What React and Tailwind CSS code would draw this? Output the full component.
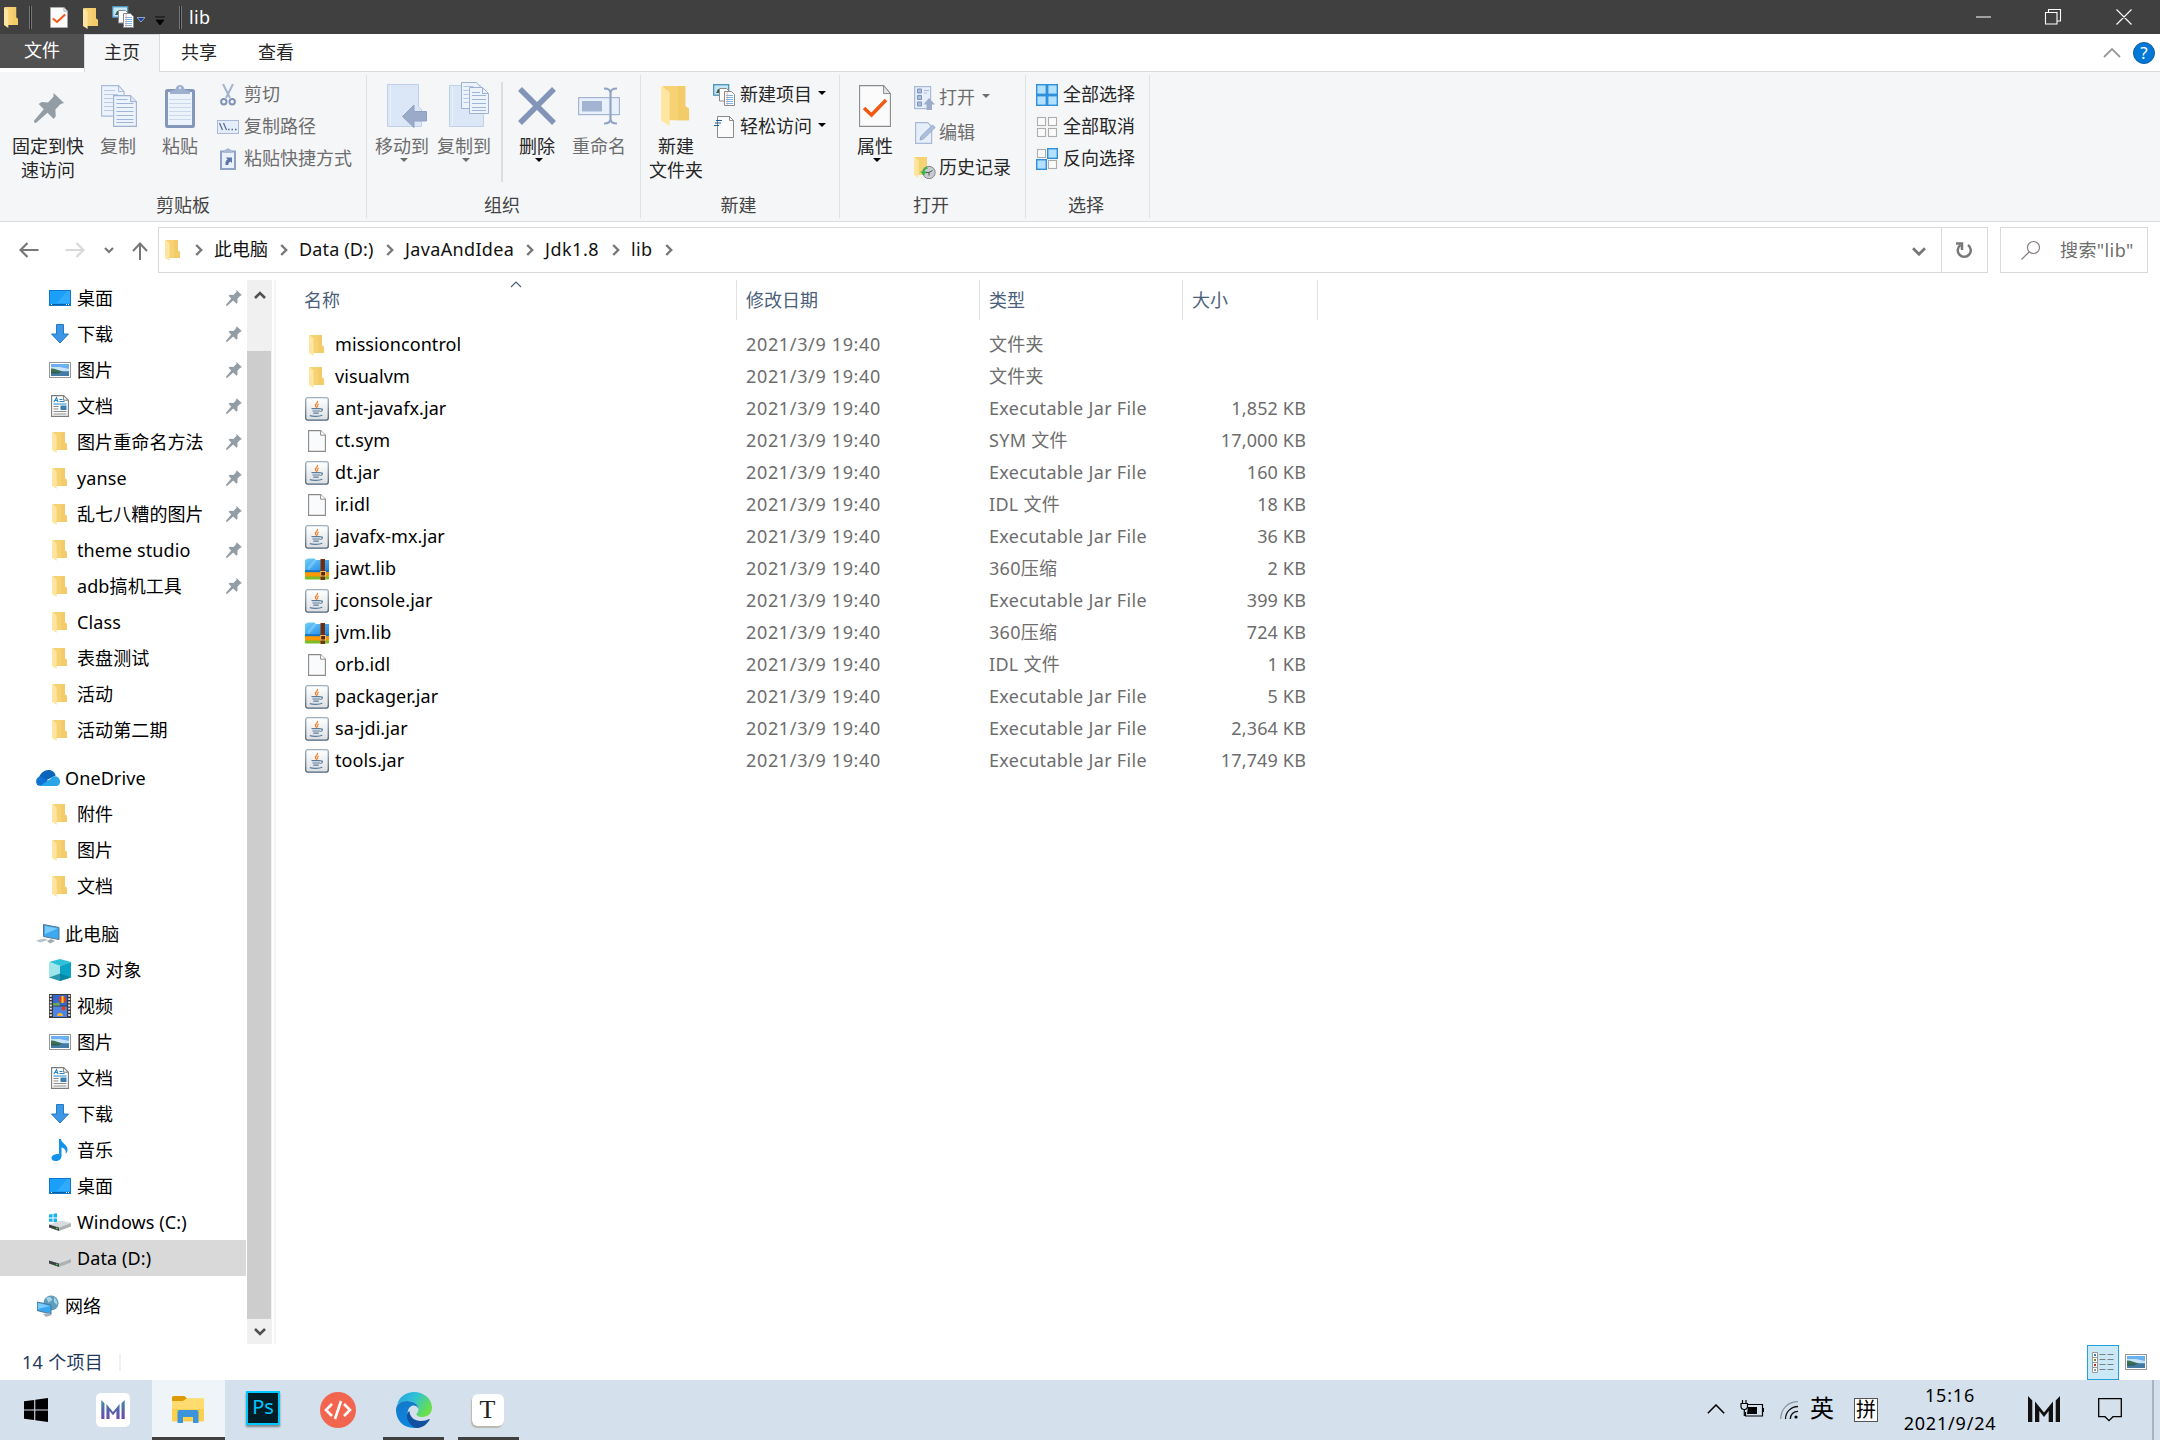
import React from "react";

const Folder = ({ className = "w-[15px] h-[21px]" }) => (
    <svg viewBox="0 0 15 21" className={className} preserveAspectRatio="none">
        <path d="M1 0h12v10.5l2 1.5v6H4z" fill="#f7d275" />
        <path d="M9 0h4v10.5l2 1.5v6H9z" fill="#f3cb68" />
        <path d="M0 0l4.6 3.2v17.8L0 18z" fill="#ffe6a0" />
    </svg>
);

const Page = ({ className = "w-[18px] h-[22px]" }) => (
    <svg viewBox="0 0 18 22" className={className}>
        <path d="M.6.6h12l4.800 4.600v16.200H.6z" fill="#fafbfc" stroke="#8a8a8a" strokeWidth="1.100" />
        <path d="M12.600.6v4.600h4.800" fill="#fff" stroke="#8a8a8a" />
    </svg>
);

const CheckPage = ({ className }) => (
    <svg viewBox="0 0 32 42" className={className} preserveAspectRatio="none">
        <path d="M.6.6h24l6.800 8v32.800H.6z" fill="#fbfbfb" stroke="#8a8a8a" strokeWidth="1.100" />
        <path d="M24.600.6v8h6.800z" fill="#e4e6e8" stroke="#8a8a8a" />
        <path d="M5 23l7.500 7L27 15" fill="none" stroke="#f25a14" strokeWidth="3.600" />
    </svg>
);

const JarIcon = () => (
    <svg viewBox="0 0 24 24" className="w-6 h-6">
        <defs>
            <linearGradient id="jar" x1="0" y1="0" x2="0" y2="1">
                <stop offset="0" stopColor="#fff" />
                <stop offset="1" stopColor="#dcdfe2" />
            </linearGradient>
            <linearGradient id="jarEdge" x1="0" y1="0" x2="0" y2="1">
                <stop offset="0" stopColor="#9db1c4" />
                <stop offset="1" stopColor="#4d6378" />
            </linearGradient>
        </defs>
        <rect x=".7" y=".7" width="22.600" height="22.400" rx="2" fill="url(#jar)" stroke="url(#jarEdge)" strokeWidth="1.300" />
        <path d="M12.500 4c1 2-3.500 3-2 5l1.300 2M13.800 7c-2.500 1.200-1.600 2-.8 3.200" fill="none" stroke="#ee8a35" strokeWidth="1.300" />
        <path d="M6.500 11.700h9M7.500 14h7.500M8.300 16.200h5.500M4.800 18.600c3 1 9.500 1 12.500-.4M15.500 12c2.800-.8 2.500 2-.3 2.500" fill="none" stroke="#5a7d9c" strokeWidth="1.200" />
    </svg>
);

const ZipIcon = () => (
    <svg viewBox="0 0 24 22" className="w-6 h-[22px]">
        <defs>
            <linearGradient id="zip" x1="0" y1="0" x2="1" y2="1">
                <stop offset="0" stopColor="#71cdfb" />
                <stop offset="1" stopColor="#1b86e4" />
            </linearGradient>
        </defs>
        <rect y="15" width="24" height="6.500" rx="1" fill="#79bd27" />
        <rect y="13.500" width="24" height="5" fill="#ff9800" />
        <path d="M0 2l3-1.500h6l2 1.500h13v11.500H0z" fill="url(#zip)" />
        <path d="M0 12.200h24v2H0z" fill="#1473cc" />
        <path d="M2 10l7-8h3l-8 10z" fill="#8fdcff" opacity=".5" />
        <rect x="15.500" y="1" width="4.500" height="21" fill="#74310f" />
        <rect x="15.700" y="13.500" width="4.800" height="4.500" fill="#5e230a" stroke="#f0c063" />
        <path d="M18 3v8" stroke="#4a1c08" strokeDasharray="1 1.500" />
    </svg>
);

const Pin = ({ className = "w-4 h-4" }) => (
    <svg viewBox="0 0 16 16" className={className}>
        <path d="M10.500 0L16 5.300l-1.800.5-2.800 3 .2 3.600-1.100 1.400-3.300-3.300L1 16l-1-.4v-.8L5.200 8.600 2.500 5.800l1.600-1 3.400.2 2.800-2.900z" fill="#929da5" />
    </svg>
);

const DesktopIcon = () => (
    <svg viewBox="0 0 22 16" className="w-[22px] h-4">
        <rect x=".5" y=".5" width="21" height="15" fill="#1ba0fa" stroke="#0f78cc" />
        <path d="M8 13L18 1h3v12z" fill="#41b2ff" opacity=".6" />
        <path d="M1 14.500h20" stroke="#0b5ea5" />
        <path d="M2 14.500h1M17 14.500h1M19 14.500h1" stroke="#fff" />
    </svg>
);

const DownloadIcon = () => (
    <svg viewBox="0 0 18 20" className="w-[18px] h-5">
        <path d="M5.500.5h7v9.500h5L9 19 .5 10h5z" fill="#3c98e6" stroke="#2779c4" />
    </svg>
);

const PictureIcon = () => (
    <svg viewBox="0 0 22 16" className="w-[22px] h-4">
        <rect x=".5" y=".5" width="21" height="15" fill="#fff" stroke="#979797" />
        <rect x="2" y="2" width="18" height="12" fill="#6bb0ef" />
        <path d="M2 5h9l9 2v2H2z" fill="#c9e3f7" />
        <path d="M2 6.500c4 0 8 2 13 3.500H2z" fill="#3e7251" />
        <path d="M2 9.500h18V14H2z" fill="#447ba5" />
        <path d="M2 9.500h11l-4 2H2z" fill="#316149" />
    </svg>
);

const DocIcon = () => (
    <svg viewBox="0 0 18 22" className="w-[18px] h-[22px]">
        <path d="M.6.6h12l4.800 4.600v16.200H.6z" fill="#fff" stroke="#7c7c7c" strokeWidth="1.100" />
        <path d="M12.600.6v4.600h4.800" fill="none" stroke="#7c7c7c" />
        <path d="M3 7l2.500-4.500L7 7M4 5.500h3M8.500 4.500h3M8.500 6.500h5M2.500 9h13" stroke="#1e86d0" strokeWidth="1.100" fill="none" />
        <path d="M2.500 11.500h5M2.500 14h5M2.500 16.500h13M2.500 19h13" stroke="#8a8a8a" />
        <rect x="9.500" y="10.500" width="6" height="4.500" fill="#3b7dae" />
    </svg>
);

const OneDriveIcon = () => (
    <svg viewBox="0 0 24 16" className="w-6 h-4">
        <path d="M3 7C5 3 8 0 12.500 0c4 0 6.500 2.500 7.200 5.500L9 11 1 15z" fill="#0a64bc" />
        <path d="M2 15.500C-1.500 12 0 7 5 6.500l9 5.500-8 4z" fill="#1072d2" />
        <path d="M4 16l11-7.500c2-4 8.500-2.500 9 2.500.2 3-1.500 5-4 5z" fill="#28a4e8" />
    </svg>
);

const PcIcon = () => (
    <svg viewBox="0 0 24 20" className="w-6 h-5">
        <path d="M7.500.5L23 3.500v12L7.500 12.500z" fill="#3fa9f0" stroke="#517590" />
        <path d="M9 2l12.500 2.500L9 10z" fill="#7accff" />
        <path d="M0 16.500l8-2 4 1.500-8 2.500z" fill="#b9c2c9" />
        <path d="M11 17l4-2 4 2-5 2.500z" fill="#9faab3" />
    </svg>
);

const CubeIcon = () => (
    <svg viewBox="0 0 22 22" className="w-[22px] h-[22px]">
        <path d="M11 0l11 3-11 4L0 3z" fill="#2cc1d8" />
        <path d="M0 3l11 4v15L0 18.500z" fill="#9fe6ea" />
        <path d="M22 3L11 7v15l11-3.500z" fill="#0aa3c6" />
        <path d="M0 18.500l11-4 11 4L11 22z" fill="#067c96" opacity=".75" />
    </svg>
);

const VideoIcon = () => (
    <svg viewBox="0 0 22 24" className="w-[22px] h-6">
        <rect width="22" height="24" fill="#3a3a3a" />
        <path d="M1.800 1v22M20.200 1v22" stroke="#e8e8e8" strokeWidth="2" strokeDasharray="1.800 1.400" />
        <rect x="4" y="1" width="14" height="10.500" fill="#3468cf" />
        <rect x="4" y="12.500" width="14" height="10.500" fill="#4f83e2" />
        <circle cx="13.500" cy="5.500" r="3.500" fill="#e33b20" />
        <path d="M13.500 2v7" stroke="#f9d52a" strokeWidth="2" />
        <path d="M4 9.500l6-1 1 3H4z" fill="#6cb04c" />
        <circle cx="14.500" cy="14.500" r="2" fill="#e33b20" />
        <path d="M8 22a3 3 0 016 0z" fill="#f9b52a" />
    </svg>
);

const MusicIcon = () => (
    <svg viewBox="0 0 18 22" className="w-[18px] h-[22px]">
        <path d="M8 0h2c0 4 6 5 6.500 10 .2 2-.8 4-1.800 5 .6-4-1.200-6-4.200-6.500V17c0 3-2.500 5-6 5-2.500 0-4-1.200-4-3 0-2.500 3-4.200 7.500-4z" fill="#1292e8" />
    </svg>
);

const DriveIcon = ({ win }) => (
    <svg viewBox="0 0 22 18" className="w-[22px] h-[18px]">
        {win && <path d="M0 1.500l3.500-.5v3.500H0zM4.500.8L8 .3v4.200H4.500zM0 5.500h3.500V9L0 8.500zM4.500 5.500H8v4l-3.500-.4z" fill="#16b4f0" />}
        <path d="M0 11.500L12 7.500l10 2.500-12 4.500z" fill="#d9dadc" />
        <path d="M0 11.500l10 3V18L0 14.500z" fill="#3d4144" />
        <path d="M10 14.500L22 10v3.500L10 18z" fill="#aeb1b4" />
        <path d="M7 15.300l1.500.5" stroke="#42d342" strokeWidth="1.500" />
    </svg>
);

const NetworkIcon = () => (
    <svg viewBox="0 0 22 22" className="w-[22px] h-[22px]">
        <circle cx="14" cy="8" r="7.600" fill="#5f9dbd" />
        <path d="M9 3c3-2 5-1 6 1s-3 2-3 4M17 2c2 2 4 5 3 8l-3-3z" fill="#a9d4e6" />
        <path d="M0 7l14 3v9L0 15.500z" fill="#3ba6f0" stroke="#4a7896" />
        <path d="M1 8l12 3-12 3z" fill="#7bcbff" />
        <path d="M6 19l6-1 3 2-6 2z" fill="#a6b0b8" />
    </svg>
);

const NewItemIcon = ({ className = "w-[22px] h-[22px]" }) => (
    <svg viewBox="0 0 22 22" className={className}>
        <rect x=".7" y=".7" width="15" height="10.500" fill="#c4e6f7" stroke="#4a93b8" strokeWidth="1.300" />
        <path d="M3 9l2-4 3 1 1 3z" fill="#33604c" />
        <path d="M6.500 4.500h7l3 3V17h-10z" fill="#fff" stroke="#8a8a8a" />
        <path d="M11.500 7.500h7l3 3v11h-10z" fill="#fff" stroke="#8a8a8a" />
        <path d="M13 11.500h7M13 13.500h7M13 15.500h7M13 17.500h7M13 19.500h7" stroke="#7db5e6" />
        <path d="M14.200 8v13" stroke="#ef9b9b" strokeWidth=".7" />
    </svg>
);

const CopyBig = ({ className = "w-9 h-[42px]" }) => (
    <svg viewBox="0 0 36 42" className={className}>
        <path d="M.6.6h17l5.500 6v24.500H.6z" fill="#edf3fc" stroke="#a9b9d6" strokeWidth="1.100" />
        <path d="M17.600.6v6h5.500" fill="none" stroke="#a9b9d6" />
        <path d="M3 5.500h11M3 9.500h14M3 13.500h9M3 17.500h9M3 21.500h9M3 25.500h9" stroke="#b9cae4" />
        <path d="M12.600 10.600h17l5.800 6v24.800H12.600z" fill="#edf3fc" stroke="#9fb1d1" strokeWidth="1.100" />
        <path d="M29.600 10.600v6h5.800" fill="#dae5f5" stroke="#9fb1d1" />
        <path d="M15.500 14.500h11M15.500 18.500h17M15.500 22.500h17M15.500 26.500h17M15.500 30.500h17M15.500 34.500h17M15.500 37.500h17" stroke="#9fb5d8" />
    </svg>
);

const PasteBig = () => (
    <svg viewBox="0 0 30 43" className="w-[30px] h-[43px]">
        <rect x="1.500" y="5.500" width="27" height="36" rx="1" fill="#edf3fc" stroke="#8598bb" strokeWidth="3" />
        <path d="M5 9V6.500l5.500-2C11 1.500 12.500 0 15 0s4 1.500 4.500 4.500l5.500 2V9z" fill="#9eb0ce" />
        <circle cx="15" cy="3" r="1.200" fill="#dfe8f5" />
        <path d="M4 14.500h22M4 18.500h22M4 22.500h22M4 26.500h22M4 30.500h22M4 34.500h22" stroke="#cad8ec" />
    </svg>
);

const ScissorsIcon = () => (
    <svg viewBox="0 0 16 22" className="w-4 h-[22px]" fill="none">
        <path d="M3 0l7 14M13 0L6 14" stroke="#a3b3ce" strokeWidth="2" />
        <circle cx="3.800" cy="17.800" r="2.700" stroke="#8093b5" strokeWidth="2" />
        <circle cx="12.200" cy="17.800" r="2.700" stroke="#8093b5" strokeWidth="2" />
    </svg>
);

const PathIcon = () => (
    <svg viewBox="0 0 22 14" className="w-[22px] h-[14px]">
        <rect x=".5" y=".5" width="21" height="13" fill="#e4edf9" stroke="#a9b9d6" />
        <path d="M2.500 3l3 7M6.500 3l3 7" stroke="#536a92" strokeWidth="1.200" />
        <path d="M11 9.500h1.500M14.500 9.500H16M18 9.500h1.500" stroke="#536a92" strokeWidth="1.500" />
    </svg>
);

const ShortcutIcon = () => (
    <svg viewBox="0 0 16 22" className="w-4 h-[22px]">
        <rect x="1" y="3.500" width="14" height="17.500" fill="#e8f0fb" stroke="#8fa2c4" strokeWidth="2" />
        <path d="M4 5V2.500L8 0l4 2.500V5z" fill="#a9b9d4" />
        <path d="M5.500 17c-.5-3 .5-4.500 2-5.500L6 9.500h6v5.500l-1.700-1.500c-1.500.8-2 1.800-2 3.500z" fill="#5d76a3" />
    </svg>
);

const MoveToIcon = () => (
    <svg viewBox="0 0 40 44" className="w-10 h-11">
        <path d="M.5.5h31v22l3 3v17H.5z" fill="#dbe6f6" stroke="#c0d0e8" />
        <path d="M3.500 1v41" fill="none" stroke="#e9f0fa" />
        <path d="M15.500 32.500L27 21v6.500h12.500v9.500H27v6.500z" fill="#9aaac9" stroke="#8fa1c3" />
    </svg>
);

const CopyToIcon = () => (
    <svg viewBox="0 0 40 46" className="w-10 h-[46px]">
        <path d="M.5 3.500h31v20l3 3v18H.5z" fill="#dbe6f6" stroke="#c0d0e8" />
        <path d="M3.500 4v40" fill="none" stroke="#e9f0fa" />
        <path d="M12.500.5h15l4.500 5v21H12.500z" fill="#edf3fc" stroke="#9fb1d1" />
        <path d="M14.500 4.500h10M14.500 8.500h5M14.500 12.500h5M14.500 16.500h5M14.500 20.500h5" stroke="#b4c5e0" />
        <path d="M20.500 5.500h13l6 6v20h-19z" fill="#edf3fc" stroke="#9fb1d1" />
        <path d="M33.500 5.500v6h6" fill="none" stroke="#9fb1d1" />
        <path d="M23 10.500h8M23 13.500h14M23 17.500h14M23 21.500h14M23 25.500h14M23 28.500h14" stroke="#9fb5d8" />
    </svg>
);

const DeleteIcon = () => (
    <svg viewBox="0 0 38 38" className="w-[38px] h-[38px]">
        <path d="M2 2l34 34M36 2L2 36" stroke="#8295b8" strokeWidth="5.500" />
    </svg>
);

const RenameIcon = () => (
    <svg viewBox="0 0 42 38" className="w-[42px] h-[38px]">
        <rect x=".6" y="10.600" width="40.800" height="17" fill="#e8f0fc" stroke="#a4b5d4" strokeWidth="1.200" />
        <rect x="4" y="14" width="20" height="10.500" fill="#a3b4d1" />
        <path d="M26 1.500c4 0 6.500 1 6.500 4.500v26c0 3.500-2.500 4.500-6.500 4.500M39 1.500c-4 0-6.500 1-6.500 4.500v26c0 3.500 2.500 4.500 6.500 4.500" fill="none" stroke="#92a4c5" strokeWidth="2.200" />
    </svg>
);

const EasyIcon = () => (
    <svg viewBox="0 0 21 22" className="w-[21px] h-[22px]">
        <path d="M3.500.5h12l4 4v17h-16z" fill="#fbfbfb" stroke="#8a8a8a" />
        <path d="M15.500.5v4h4" fill="none" stroke="#8a8a8a" />
        <path d="M2 4.500h6M1 7h6M0 9.500h5" stroke="#1f5f9c" strokeWidth="1.200" />
    </svg>
);

const OpenIcon = () => (
    <svg viewBox="0 0 22 24" className="w-[22px] h-6">
        <rect x=".6" y=".6" width="16" height="22" fill="#e6eefa" stroke="#a9b9d6" strokeWidth="1.200" />
        <path d="M3.500 3h4v4h-4zM3.500 9.500h4v4h-4zM3.500 16h4v4h-4z" fill="#a9bbdb" stroke="#7f95bb" />
        <path d="M10 4.500h5M10 7h3" stroke="#a9b9d6" />
        <path d="M15 12l6 6.500h-3V24h-5.500v-5.500H9.500z" fill="#9cadcb" />
    </svg>
);

const EditIcon = () => (
    <svg viewBox="0 0 21 22" className="w-[21px] h-[22px]">
        <path d="M.6.600h12l4 4v16.800H.6z" fill="#e6eefa" stroke="#a9b9d6" strokeWidth="1.200" />
        <path d="M5 18l1-3.500L17.500 3l2.500 2.500L8.500 16.800z" fill="#aebfdd" stroke="#93a6c9" />
    </svg>
);

const HistoryIcon = () => (
    <svg viewBox="0 0 22 22" className="w-[22px] h-[22px]">
        <path d="M1 0h12v18H4z" fill="#f7d275" />
        <path d="M0 0l4.600 3.200V21L0 18z" fill="#ffe6a0" />
        <circle cx="15" cy="15.500" r="6.200" fill="#c8cbcd" stroke="#85898c" />
        <path d="M12 15.500h3l3.500-2M15 15.500v3" stroke="#555" fill="none" />
        <path d="M12.500 9.500c-3 1-4 3-4 5H6l4 4 2.500-4h-1.800c.2-2 1.500-3 3.300-3z" fill="#33b54a" />
    </svg>
);

// four tiles, `on` lists which of them are highlighted
const TilesIcon = ({ on }) => (
    <svg viewBox="0 0 22 22" className="w-[22px] h-[22px]">
        {[[0, 0], [11, 0], [0, 11], [11, 11]].map(([x, y], i) => (
            on.includes(i)
                ? <rect key={i} x={x + 0.7} y={y + 0.7} width="9.600" height="9.600" fill="#b3e0ff" stroke="#2f8fdb" strokeWidth="1.400" />
                : <rect key={i} x={x + 1.5} y={y + 1.5} width="8" height="8" fill="#fbfbfb" stroke="#adadad" strokeWidth="1.100" />
        ))}
    </svg>
);

const Caret = ({ className = "text-black" }) => (
    <svg viewBox="0 0 8 4" className={`w-2 h-1 ${className}`}>
        <path d="M0 0h8L4 4z" fill="currentColor" />
    </svg>
);

const Chevron = ({ d = "M1 1l6 6-6 6", box = "0 0 8 14", className, width = 2 }) => (
    <svg viewBox={box} className={className} fill="none" stroke="currentColor" strokeWidth={width}>
        <path d={d} />
    </svg>
);

const BigButton = ({ icon, lines, width, disabled, caret }) => (
    <div className={`flex flex-col items-center shrink-0 pt-[10px] ${width} ${disabled ? "text-[#6d6d6d]" : "text-[#262626]"}`}>
        <div className="h-12 flex items-center justify-center">{icon}</div>
        <div className="mt-1 text-center leading-6 whitespace-nowrap">
            {lines.map((line) => <div key={line}>{line}</div>)}
        </div>
        {caret && <Caret className={disabled ? "ml-1 text-[#6d6d6d]" : "ml-1 text-black"} />}
    </div>
);

const SmallButton = ({ icon, label, disabled, caret, height = "h-8", gap = "gap-1" }) => (
    <div className={`flex items-center whitespace-nowrap ${height} ${gap} ${disabled ? "text-[#6d6d6d]" : "text-[#262626]"}`}>
        <span className="w-6 flex justify-center">{icon}</span>
        <span className="leading-6 -mt-0.5">{label}</span>
        {caret && <Caret className={disabled ? "ml-[5px] -mt-1 text-[#6d6d6d]" : "ml-0.5 -mt-1 text-black"} />}
    </div>
);

const Group = ({ label, width, children, shift = "pr-[3px]" }) => (
    <div className={`flex shrink-0 h-[149px] ${width}`}>
        <div className="flex-1 flex flex-col">
            <div className="flex h-[121px]">{children}</div>
            <div className={`text-center leading-6 text-[#444] ${shift}`}>{label}</div>
        </div>
        <div className="w-px my-[3px] bg-[#dfe1e3]" />
    </div>
);

const quick = [
    ["桌面", DesktopIcon], ["下载", DownloadIcon], ["图片", PictureIcon], ["文档", DocIcon],
    ["图片重命名方法", Folder], ["yanse", Folder], ["乱七八糟的图片", Folder], ["theme studio", Folder],
    ["adb搞机工具", Folder], ["Class", Folder], ["表盘测试", Folder], ["活动", Folder], ["活动第二期", Folder],
];

const thisPc = [
    ["3D 对象", CubeIcon], ["视频", VideoIcon], ["图片", PictureIcon], ["文档", DocIcon], ["下载", DownloadIcon],
    ["音乐", MusicIcon], ["桌面", DesktopIcon], ["Windows (C:)", () => <DriveIcon win />], ["Data (D:)", DriveIcon],
];

const files = [
    ["missioncontrol", "dir", "文件夹", ""],
    ["visualvm", "dir", "文件夹", ""],
    ["ant-javafx.jar", "jar", "Executable Jar File", "1,852 KB"],
    ["ct.sym", "page", "SYM 文件", "17,000 KB"],
    ["dt.jar", "jar", "Executable Jar File", "160 KB"],
    ["ir.idl", "page", "IDL 文件", "18 KB"],
    ["javafx-mx.jar", "jar", "Executable Jar File", "36 KB"],
    ["jawt.lib", "zip", "360压缩", "2 KB"],
    ["jconsole.jar", "jar", "Executable Jar File", "399 KB"],
    ["jvm.lib", "zip", "360压缩", "724 KB"],
    ["orb.idl", "page", "IDL 文件", "1 KB"],
    ["packager.jar", "jar", "Executable Jar File", "5 KB"],
    ["sa-jdi.jar", "jar", "Executable Jar File", "2,364 KB"],
    ["tools.jar", "jar", "Executable Jar File", "17,749 KB"],
];

const fileIcons = { dir: Folder, jar: JarIcon, page: Page, zip: ZipIcon };

const TreeRow = ({ label, Icon, pinned, selected }) => (
    <div className={`flex items-center h-9 w-[246px] pl-12 pr-1 ${selected ? "bg-[#d9d9d9]" : ""}`}>
        <span className={`w-6 flex justify-center ${Icon === Folder ? "pr-0.5" : ""}`}><Icon /></span>
        <span className="ml-[5px] flex-1 leading-9 tracking-[0.1px]">{label}</span>
        {pinned && <Pin />}
    </div>
);

const TreeRoot = ({ label, Icon }) => (
    <div className="flex items-center h-9 mt-3 pl-9">
        <span className="w-6 flex justify-center"><Icon /></span>
        <span className="ml-[5px] leading-9 tracking-[0.1px]">{label}</span>
    </div>
);

const TitleBar = () => (
    <div className="flex items-center h-[34px] bg-[#404040] text-white shrink-0">
        <Folder className="ml-1 w-[14px] h-[21px]" />
        <div className="ml-[11px] w-[3px] h-[23px] border-x border-[#777] bg-[#222]" />
        <CheckPage className="ml-[18px] w-[18px] h-[21px]" />
        <Folder className="ml-[15px] w-[15px] h-[21px] mt-0.5" />
        <NewItemIcon className="ml-[14px] w-[22px] h-[22px]" />
        <svg viewBox="0 0 8 5" className="ml-[3px] mt-1 w-2 h-[5px]"><path d="M0 .5h8L4 5z" fill="#12409c" stroke="#c3d0ea" strokeWidth=".7" /></svg>
        <svg viewBox="0 0 10 9" className="ml-[10px] mt-[6px] w-[10px] h-[9px]"><path d="M0 1h10M1 4h8L5 9z" fill="#000" stroke="#000" strokeWidth=".8" /></svg>
        <div className="ml-[14px] w-[3px] h-[23px] border-x border-[#777] bg-[#222]" />
        <span className="ml-[7px] flex-1 leading-[34px] tracking-[0.3px]">lib</span>
        <svg viewBox="0 0 156 16" className="w-[156px] h-4 mr-[28px]" fill="none" stroke="#fff" strokeWidth="1.100">
            <path d="M0 8h15M69.500 3.500h11.500v11.500H69.500zM72.500 3.500v-3h12v11.500h-3.500M140.500.5l15 15M155.500.5l-15 15" />
        </svg>
    </div>
);

const Ribbon = () => (
    <div className="flex h-[150px] bg-[#f5f6f8] border-b border-[#d9dbdd] shrink-0">
        <Group label="剪贴板" width="w-[367px]" shift="">
            <BigButton width="w-24" icon={<Pin className="w-[30px] h-[30px] mt-1 ml-px" />} lines={["固定到快", "速访问"]} />
            <BigButton width="w-[44px]" icon={<CopyBig className="w-9 h-[42px] ml-0.5" />} lines={["复制"]} disabled />
            <BigButton width="ml-1 w-[72px]" icon={<PasteBig />} lines={["粘贴"]} disabled />
            <div className="pt-[7px]">
                <SmallButton icon={<ScissorsIcon />} label="剪切" disabled />
                <SmallButton icon={<PathIcon />} label="复制路径" disabled />
                <SmallButton icon={<ShortcutIcon />} label="粘贴快捷方式" disabled />
            </div>
        </Group>
        <Group label="组织" width="w-[274px]">
            <BigButton width="ml-0.5 w-[66px]" icon={<div className="pl-[10px]"><MoveToIcon /></div>} lines={["移动到"]} disabled caret />
            <BigButton width="w-[58px]" icon={<div className="pl-[10px] pb-0.5"><CopyToIcon /></div>} lines={["复制到"]} disabled caret />
            <div className="ml-2 mt-[10px] w-0.5 h-[100px] bg-[#dcdee1]" />
            <BigButton width="w-[68px]" icon={<DeleteIcon />} lines={["删除"]} caret />
            <BigButton width="w-14" icon={<RenameIcon />} lines={["重命名"]} disabled />
        </Group>
        <Group label="新建" width="w-[199px]">
            <BigButton width="w-[70px]" icon={<Folder className="w-7 h-10 mr-0.5" />} lines={["新建", "文件夹"]} />
            <div className="pt-[7px] pl-px">
                <SmallButton icon={<NewItemIcon />} label="新建项目" caret />
                <SmallButton icon={<EasyIcon />} label="轻松访问" caret />
            </div>
        </Group>
        <Group label="打开" width="w-[186px]">
            <BigButton width="w-[70px]" icon={<CheckPage className="w-8 h-[42px]" />} lines={["属性"]} caret />
            <div className="pt-2 pl-[3px]">
                <SmallButton height="h-[35px]" gap="gap-0.5" icon={<OpenIcon />} label="打开" disabled caret />
                <SmallButton height="h-[35px]" gap="gap-0.5" icon={<EditIcon />} label="编辑" disabled />
                <SmallButton height="h-[35px]" gap="gap-0.5" icon={<HistoryIcon />} label="历史记录" />
            </div>
        </Group>
        <Group label="选择" width="w-[124px]">
            <div className="pt-[7px] pl-[9px]">
                <SmallButton icon={<TilesIcon on={[0, 1, 2, 3]} />} label="全部选择" />
                <SmallButton icon={<TilesIcon on={[]} />} label="全部取消" />
                <SmallButton icon={<TilesIcon on={[1, 2]} />} label="反向选择" />
            </div>
        </Group>
    </div>
);

const crumbs = [
    ["此电脑", "w-[54px]"], ["Data (D:)", "w-[75px] tracking-[0.15px]"], ["JavaAndIdea", "w-[109px] tracking-[0.35px]"], ["Jdk1.8", "w-[55px] tracking-[0.5px]"], ["lib", "w-[22px] tracking-[0.3px]"],
];

const AddressBar = () => (
    <div className="flex items-start h-[58px] pt-[5px] shrink-0 text-[#777]">
        <div className="flex items-center w-[158px] h-[46px] pl-[19px]">
            <Chevron box="0 0 20 16" d="M19.500 8H2M8.500 1L1.500 8l7 7" className="w-5 h-4" width={2.2} />
            <Chevron box="0 0 20 16" d="M.5 8H18M11.500 1l7 7-7 7" className="ml-[26px] w-5 h-4 text-[#d9d9d9]" width={2.2} />
            <Chevron box="0 0 10 7" d="M1 1l4 4 4-4" className="ml-[19px] w-[10px] h-[7px]" width={2.2} />
            <Chevron box="0 0 16 18" d="M8 18V2M1 9l7-7.500L15 9" className="ml-[18px] mt-0.5 w-4 h-[18px]" width={2} />
        </div>
        <div className="flex items-center h-[46px] w-[1830px] border border-[#d9d9d9] shrink-0">
            <Folder className="ml-[6px] w-[15px] h-[21px]" />
            <div className="flex items-center flex-1 pl-[15px]">
                {crumbs.map(([name, width]) => (
                    <React.Fragment key={name}>
                        <Chevron box="0 0 8 12" d="M1.200 1l5 5-5 5" className="w-2 h-3" width={2.400} />
                        <span className={`ml-[11px] mr-3 leading-6 -mt-0.5 whitespace-nowrap text-[#111] ${width}`}>{name}</span>
                    </React.Fragment>
                ))}
                <Chevron box="0 0 8 12" d="M1.200 1l5 5-5 5" className="w-2 h-3" width={2.400} />
            </div>
            <Chevron box="0 0 14 9" d="M1 1.200l6 6 6-6" className="w-[14px] h-[9px] mt-0.5 mr-[15px]" width={2.800} />
            <div className="flex items-center justify-center h-full w-[46px] border-l border-[#d9d9d9]">
                <svg viewBox="0 0 17 17" className="w-[17px] h-[17px]" fill="none" stroke="#777" strokeWidth="2.500">
                    <path d="M12 3a6.500 6.500 0 11-7.500 0" />
                    <path d="M0 1.500h6V8" />
                </svg>
            </div>
        </div>
        <div className="flex items-center h-[46px] w-[148px] ml-3 border border-[#d9d9d9]">
            <svg viewBox="0 0 20 20" className="ml-5 w-5 h-5" fill="none" stroke="#8a7f80" strokeWidth="1.200">
                <circle cx="12.500" cy="7.500" r="6" />
                <path d="M8 12l-7.500 7.500" />
            </svg>
            <span className="ml-[19px] leading-6 whitespace-nowrap text-[#6d6d6d] tracking-[0.4px]">搜索"lib"</span>
        </div>
    </div>
);

const Sidebar = () => (
    <div className="flex w-[277px] shrink-0">
        <div className="w-[247px] text-black">
            {quick.map(([label, Icon], i) => <TreeRow key={label} label={label} Icon={Icon} pinned={i < 9} />)}
            <TreeRoot label="OneDrive" Icon={OneDriveIcon} />
            {["附件", "图片", "文档"].map((label) => <TreeRow key={label} label={label} Icon={Folder} />)}
            <TreeRoot label="此电脑" Icon={PcIcon} />
            {thisPc.map(([label, Icon]) => <TreeRow key={label} label={label} Icon={Icon} selected={label === "Data (D:)"} />)}
            <TreeRoot label="网络" Icon={NetworkIcon} />
        </div>
        <div className="flex flex-col items-center w-[25px] bg-[#f0f0f0] text-[#505050]">
            <Chevron box="0 0 12 8" d="M1 7l5-5 5 5" className="mt-[11px] w-3 h-2" width={2.600} />
            <div className="mt-[52px] flex-1 w-6 self-start bg-[#cdcdcd]" />
            <div className="h-[25px] flex items-center">
                <Chevron box="0 0 12 8" d="M1 1l5 5 5-5" className="w-3 h-2" width={2.600} />
            </div>
        </div>
        <div className="ml-0.5 w-0.5 bg-[#f5f5f5]" />
    </div>
);

const FileList = () => (
    <div className="flex-1">
        <div className="flex h-10 leading-10 text-[#4c607a]">
            <div className="relative w-[460px] pl-[27px] border-r border-[#e2e2e2]">
                名称
                <Chevron box="0 0 12 7" d="M1 6l5-5 5 5" className="absolute left-[233px] top-px w-3 h-[7px]" width={1.200} />
            </div>
            <div className="w-[243px] pl-[9px] border-r border-[#e2e2e2]">修改日期</div>
            <div className="w-[203px] pl-[9px] border-r border-[#e2e2e2]">类型</div>
            <div className="w-[135px] pl-[9px] border-r border-[#e2e2e2]">大小</div>
        </div>
        <div className="pt-2 text-[#6d6d6d]">
            {files.map(([name, kind, type, size]) => {
                const Icon = fileIcons[kind];
                return (
                    <div key={name} className="flex items-center h-8 leading-8 pl-7">
                        <span className={`w-6 flex justify-center pt-0.5 ${kind === "dir" ? "pr-0.5" : ""}`}><Icon /></span>
                        <span className="w-[411px] pl-[6px] text-black tracking-[0.08px]">{name}</span>
                        <span className="w-[243px] pl-[6px] tracking-[0.65px]">2021/3/9 19:40</span>
                        <span className="w-[203px] pl-[6px] tracking-[0.3px]">{type}</span>
                        <span className="w-[120px] text-right tracking-[0.15px]">{size}</span>
                    </div>
                );
            })}
        </div>
    </div>
);

const StatusBar = () => (
    <div className="flex items-center h-9 shrink-0 text-[#1e395b]">
        <span className="ml-[22px] w-[97px] leading-9 tracking-[0.3px]">14 个项目</span>
        <div className="w-0.5 h-[17px] bg-[#f0f0f0] flex-none" />
        <div className="ml-auto mt-px flex items-center justify-center w-8 h-[35px] border border-[#26a0da] bg-[#cbe8f6]">
            <svg viewBox="0 0 22 22" className="w-[22px] h-[22px]">
                <path d="M.5.5h5v20h-5zM.5 5.500h5M.5 10.500h5M.5 15.500h5" fill="#fff" stroke="#999" />
                <path d="M2 3h2" stroke="#2f7fd0" strokeWidth="2" />
                <path d="M2 8h2" stroke="#6c8a2c" strokeWidth="2" />
                <path d="M2 13h2" stroke="#c03020" strokeWidth="2" />
                <path d="M2 18h2" stroke="#8899aa" strokeWidth="2" />
                <path d="M7.500 2.500h6M15.500 2.500h6M7.500 7.500h6M15.500 7.500h6M7.500 12.500h6M15.500 12.500h6M7.500 17.500h6M15.500 17.500h6" stroke="#7c8084" />
            </svg>
        </div>
        <div className="ml-[6px] mr-[13px]"><PictureIcon /></div>
    </div>
);

const mark = "M0 0l4.300 4.500V26H0zM7 26V5.500l9 11 9-11V26h-4.300V15L16 21l-4.700-6v11zM32 0l-4.300 4.500V26H32z";

const TaskItem = ({ children, width, line, active }) => (
    <div className={`flex flex-col items-center h-[60px] shrink-0 ${width} ${active ? "bg-[#eff4f8]" : ""}`}>
        <div className="flex-1 flex items-center">{children}</div>
        <div className={`h-[3px] w-full ${line ? "bg-[#404040]" : ""}`} />
    </div>
);

const Taskbar = () => (
    <div className="flex h-[60px] bg-[#d4e1ec] shrink-0 text-black">
        <TaskItem width="w-[72px]">
            <svg viewBox="0 0 24 24" className="w-6 h-6 mt-[2px]"><path d="M0 3.200L10.200 2v9.400H0zM11.300 1.700L24 0v11.400H11.300zM0 12.600h10.200V22L0 20.800zM11.300 12.600H24V24l-12.700-1.700z" /></svg>
        </TaskItem>
        <TaskItem width="ml-[5px] w-[72px]">
            <div className="flex items-center justify-center w-[34px] h-[34px] mt-[2px] rounded-[5px] bg-white">
                <svg viewBox="0 0 32 26" className="w-6 h-[19px]">
                    <defs><linearGradient id="mk" x1="0" y1="0" x2="0" y2="1"><stop offset="0" stopColor="#3f8f9c" /><stop offset=".5" stopColor="#5566a8" /><stop offset="1" stopColor="#6a4bb0" /></linearGradient></defs>
                    <path d={mark} fill="url(#mk)" />
                </svg>
            </div>
        </TaskItem>
        <TaskItem width="ml-[3px] w-[73px]" line active>
            <svg viewBox="0 0 32 27" className="w-8 h-[27px] mt-[2px] mr-px">
                <path d="M0 1.500Q0 0 1.500 0h11l2.500 2.500-2 3H0z" fill="#dd9a04" />
                <path d="M0 5h11l4-2.500h16q1 0 1 1V24q0 1.500-1.500 1.500h-29Q0 25.500 0 24z" fill="#fccf4f" />
                <path d="M0 5h11l4-2.500h16q1 0 1 1V13H0z" fill="#ffdb70" />
                <path d="M5.500 16q0-2 2-2h17q2 0 2 2v11h-5.500v-6H11v6H5.500z" fill="#3a94dc" />
            </svg>
        </TaskItem>
        <TaskItem width="ml-[2px] w-[72px]">
            <div className="w-[34px] h-[34px] mb-px border-[2.500px] border-[#00c8ff] bg-[#001d26] text-[#00c8ff] text-[20px] leading-[27px] text-center shadow-[0_2px_2px_#00000066]">Ps</div>
        </TaskItem>
        <TaskItem width="ml-[3px] w-[72px]">
            <div className="flex items-center justify-center w-9 h-9 mt-[2px] rounded-full bg-[#f26650]">
                <svg viewBox="0 0 28 20" className="w-7 h-5" fill="none" stroke="#fff" strokeWidth="2.600"><path d="M8 4l-6 6 6 6M20 4l6 6-6 6M17 1l-6 18" /></svg>
            </div>
        </TaskItem>
        <TaskItem width="ml-[9px] w-[61px]" line>
            <svg viewBox="0 0 36 36" className="w-9 h-9 mt-[2px]">
                <defs>
                    <linearGradient id="edgeTop" x1="0" y1="0" x2="1" y2=".5"><stop offset="0" stopColor="#249fe0" /><stop offset=".5" stopColor="#2fc2d6" /><stop offset="1" stopColor="#6be04a" /></linearGradient>
                    <linearGradient id="edgeLeft" x1="0" y1="0" x2=".4" y2="1"><stop offset="0" stopColor="#1478c8" /><stop offset="1" stopColor="#0a86de" /></linearGradient>
                </defs>
                <path d="M1 13C3 5 10 0 18 0c10 0 18 7 18 15.500 0 6-4.500 9.500-9.500 9.500-4 0-6.500-1.500-6-3 .6-1.500 2-2 2-5C22 12.500 17 9 11.500 9 7 9 3 10.500 1 13z" fill="url(#edgeTop)" />
                <path d="M0 18C0 12 5 9 11 9c6 0 11.500 3 11.500 8-1-3-4-4-6-3.500C9 16 10 29 20 35.900 8 37 0 28.500 0 18z" fill="url(#edgeLeft)" />
                <path d="M13.500 19c0 6 5 10 11.500 10 3.500 0 6-1 8-2 .6-.2.9.3.5.9C30.500 32.800 26 36 20 36 13 34 7.500 23 13.500 19z" fill="#10509f" />
            </svg>
        </TaskItem>
        <TaskItem width="ml-[14px] w-[61px]" line>
            <div className="flex items-center justify-center w-8 h-8 mt-[2px] mr-0.5 rounded-[6px] bg-white shadow-[-1px_2px_1px_#bbb8b0] text-[26px] text-[#222] font-['Liberation_Serif',serif] leading-8">T</div>
        </TaskItem>

        <div className="flex items-center ml-auto">
            <Chevron box="0 0 18 10" d="M.8 9.200L9 1l8.200 8.200" className="w-[18px] h-[10px] mb-0.5" width={1.500} />
            <svg viewBox="0 0 24 18" className="ml-[15px] w-6 h-[18px] mb-0.5" fill="none" stroke="#000" strokeWidth="1.200">
                <path d="M8 4.500h14.500v11.500H5.500v-4" />
                <path d="M23.500 8v4" />
                <path d="M8 7h9v7H7z" fill="#000" stroke="none" />
                <path d="M1 3.500h6.500v3q0 3-3.200 3T1 6.500zM2.500 0v3.500M6 0v3.500M4.300 9.500V16" />
            </svg>
            <svg viewBox="0 0 18 18" className="ml-4 w-[18px] h-[18px]" fill="none" stroke="#111" strokeWidth="1.300">
                <path d="M.7 18C.7 8 8 .7 18 .7" stroke="#8b979f" />
                <path d="M5.500 18C5.500 11 11 5.500 18 5.500" />
                <path d="M10.300 18c0-4.500 3.200-7.700 7.700-7.700" />
                <circle cx="16" cy="16" r="1.600" fill="#000" stroke="none" />
            </svg>
            <span className="ml-3 w-6 text-[24px] leading-[55px] mb-[5px]">英</span>
            <span className="ml-5 w-6 h-6 bg-white border border-[#555] text-[20px] leading-[21px] flex justify-center">拼</span>
            <div className="ml-[22px] w-[100px] text-center leading-7 tracking-[0.8px] mb-0.5">
                <div>15:16</div>
                <div>2021/9/24</div>
            </div>
            <svg viewBox="0 0 32 26" className="ml-[28px] w-8 h-[26px] mb-0.5"><path d={mark} fill="#111" /></svg>
            <svg viewBox="0 0 24 24" className="ml-[38px] w-6 h-6" fill="none" stroke="#000" strokeWidth="1.300"><path d="M.7.700h22.600v18H15l-4 4-4-4H.7z" /></svg>
            <div className="ml-[30px] mr-[6px] w-0.5 h-[60px] bg-[#a8b5c0]" />
        </div>
    </div>
);

const App = () => {
    return (
        <div className="flex flex-col w-[2160px] h-[1440px] overflow-hidden bg-white text-[18px] font-['Noto_Sans','Noto_Sans_CJK_SC',sans-serif]">
            <TitleBar />
            <div className="flex h-[38px] shrink-0 text-[#262626] leading-[37px]">
                <div className="w-[84px] h-[34px] bg-[#515151] text-white text-center leading-[33px]">文件</div>
                <div className="w-[76px] text-center bg-[#f5f6f8] border-x border-t border-[#dadbdc] leading-[35px]">主页</div>
                <div className="flex flex-1 border-b border-[#dadbdc] pl-[21px] gap-[41px] items-center text-[#262626]">
                    <span>共享</span>
                    <span>查看</span>
                    <Chevron box="0 0 18 10" d="M1 9l8-8 8 8" className="ml-auto w-[18px] h-[10px] text-[#9a9a9a]" width={1.800} />
                    <span className="-ml-[29px] mr-[5px] w-[22px] h-[22px] rounded-full bg-[#0078d7] border border-[#0a5aa0] text-white text-[17px] leading-5 text-center">?</span>
                </div>
            </div>
            <Ribbon />
            <AddressBar />
            <div className="flex h-[1064px] shrink-0">
                <Sidebar />
                <FileList />
            </div>
            <StatusBar />
            <Taskbar />
        </div>
    );
}
export default App
